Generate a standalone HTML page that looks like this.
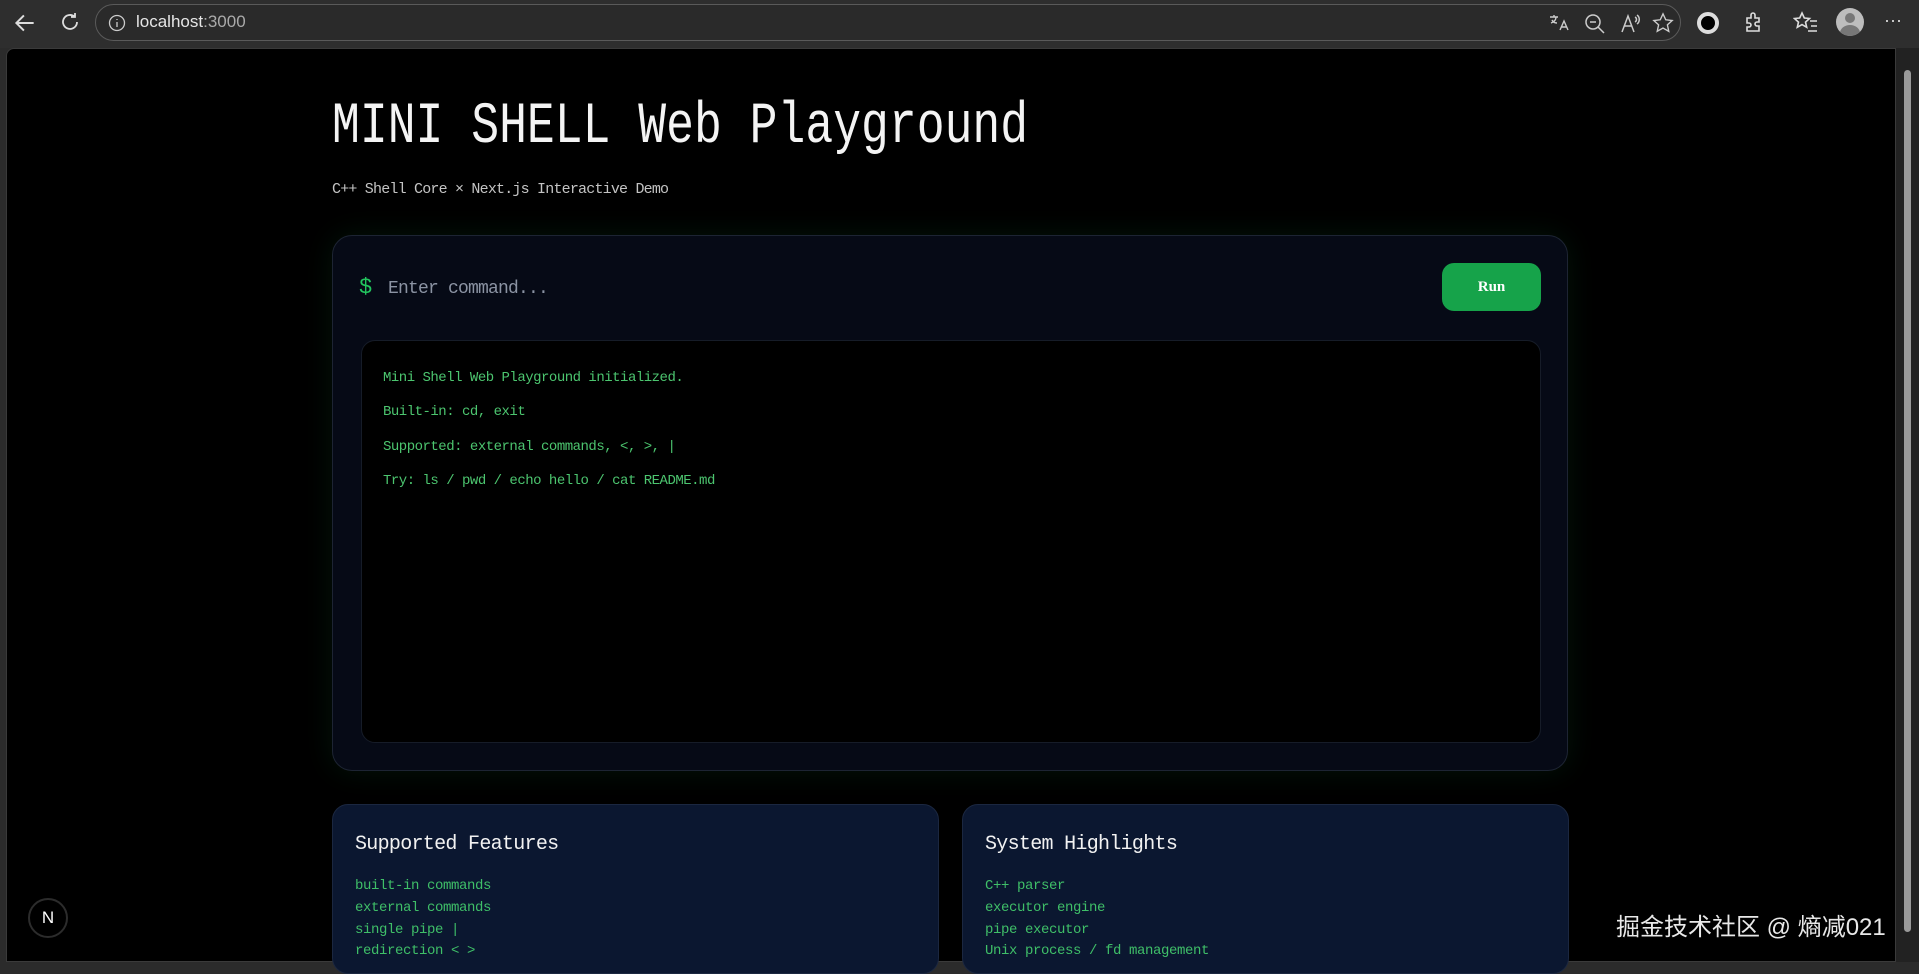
<!DOCTYPE html>
<html><head><meta charset="utf-8"><style>
*{margin:0;padding:0;box-sizing:border-box}
body{width:1919px;height:962px;overflow:hidden;background:#2b2b2b;font-family:"Liberation Mono","Noto Sans CJK SC",monospace;position:relative}
.tb{position:absolute;left:0;top:0;width:1919px;height:48px;background:#2e2e2e}
.url{position:absolute;left:95px;top:4px;width:1586px;height:37px;border:1px solid #5a5a5a;border-radius:19px;background:#2a2a2a}
.url span{position:absolute;left:40px;top:7px;color:#e6e6e6;font-family:"Liberation Sans",sans-serif;font-size:17px}
.frame{position:absolute;left:6px;top:48px;width:1890px;height:914px;background:#000;border-top-left-radius:8px;border:1px solid #3a3a3a}
.sb{position:absolute;left:1896px;top:48px;width:23px;height:914px;background:#222}
.sb div{position:absolute;left:8px;top:22px;width:7px;height:862px;background:#9a9a9a;border-radius:4px}
.t{position:absolute;white-space:nowrap}
.title{left:332px;top:99px;font-family:"Liberation Mono",monospace;font-size:58px;color:#f4f4f4;transform:scaleX(0.8);transform-origin:left top;line-height:1}
.sub{left:332px;top:181px;font-size:15px;color:#c4c4c4;letter-spacing:-0.8px}
.card{position:absolute;left:332px;top:235px;width:1236px;height:536px;background:#060a16;border:1px solid #1d2433;border-radius:20px;box-shadow:0 0 30px rgba(22,163,74,0.12)}
.out{position:absolute;left:361px;top:340px;width:1180px;height:403px;background:#000;border:1px solid #161c28;border-radius:14px}
.run{position:absolute;left:1442px;top:263px;width:99px;height:48px;background:#16a34a;border-radius:12px;color:#fff;font-family:"Liberation Serif",serif;font-weight:bold;font-size:15px;text-align:center;line-height:48px}
.g{color:#4cc56f;font-size:14px;letter-spacing:-0.5px}
.box{position:absolute;top:804px;width:607px;height:170px;background:#0b1730;border:1px solid #1b2740;border-radius:16px}
.h{font-size:20px;color:#f2f2f2;letter-spacing:-0.7px}
.li{font-size:14px;color:#3fbf68;letter-spacing:-0.4px}
.badge{position:absolute;left:28px;top:898px;width:40px;height:40px;border-radius:50%;background:#000;border:2px solid #2c2c2c;color:#fff;font-family:"Liberation Sans",sans-serif;font-size:17px;text-align:center;line-height:36px}
.wm{position:absolute;left:1616px;top:907px;color:#e8e8e8;font-family:"Liberation Sans","Noto Sans CJK SC",sans-serif;font-size:24px;text-shadow:0 0 3px #000}
.ic{position:absolute;top:10px}
</style></head><body>
<div class="tb">
<svg class="ic" style="left:12px" width="26" height="26" viewBox="0 0 24 24" fill="none" stroke="#ddd" stroke-width="1.8"><path d="M20 12H5M11 5l-7 7 7 7"/></svg>
<svg class="ic" style="left:58px" width="24" height="24" viewBox="0 0 24 24" fill="none" stroke="#ddd" stroke-width="1.8"><path d="M19 12a7 7 0 1 1-2.5-5.4M17 3v4h-4"/></svg>
<div class="url"><svg style="position:absolute;left:12px;top:9px" width="18" height="18" viewBox="0 0 18 18" fill="none" stroke="#ccc" stroke-width="1.3"><circle cx="9" cy="9" r="7.5"/><path d="M9 8v5M9 5v1"/></svg><span>localhost<span style="position:static;color:#aaa">:3000</span></span>
<svg style="position:absolute;left:1452px;top:8px" width="22" height="20" viewBox="0 0 22 20" fill="none" stroke="#ccc" stroke-width="1.4"><path d="M2 4h8M6 2v2M3 10c3-1 5-3 5-6M4 7c1 2 3 3 5 3M12 17l4-9 4 9M13.5 14h5"/></svg>
<svg style="position:absolute;left:1488px;top:8px" width="22" height="22" viewBox="0 0 22 22" fill="none" stroke="#ccc" stroke-width="1.5"><circle cx="9" cy="9" r="7"/><path d="M14 14l6 6M6 9h6"/></svg>
<svg style="position:absolute;left:1524px;top:8px" width="22" height="22" viewBox="0 0 22 22" fill="none" stroke="#ccc" stroke-width="1.5"><path d="M2 19L8 3l6 16M4.5 13h7M15 4c2 1 2 4 0 5M17 2c3 2 3 7 0 9"/></svg>
<svg style="position:absolute;left:1556px;top:7px" width="22" height="22" viewBox="0 0 24 24" fill="none" stroke="#ccc" stroke-width="1.5"><path d="M12 2l3 6.5 7 .8-5.2 4.8 1.5 7L12 17.5 5.7 21l1.5-7L2 9.3l7-.8z"/></svg>
</div>
<div style="position:absolute;left:1697px;top:12px;width:22px;height:22px;border-radius:50%;background:#000;border:4px solid #ddd"></div>
<svg class="ic" style="left:1742px;top:11px" width="24" height="24" viewBox="0 0 24 24" fill="none" stroke="#ddd" stroke-width="1.6"><path d="M5 7h4V4a2 2 0 0 1 4 0v3h4v4h-2a2 2 0 0 0 0 4h2v5H5v-4h2a2 2 0 0 0 0-4H5z"/></svg>
<svg class="ic" style="left:1793px;top:11px" width="26" height="24" viewBox="0 0 26 24" fill="none" stroke="#ddd" stroke-width="1.6"><path d="M9 2l2.3 5 5.2.5-4 3.6 1.2 5.2L9 13.6 4.3 16.3l1.2-5.2-4-3.6L6.7 7zM17 10h7M18 15h6M15 20h9"/></svg>
<div style="position:absolute;left:1836px;top:8px;width:28px;height:28px;border-radius:50%;background:#bdbdbd;overflow:hidden"><div style="position:absolute;left:9px;top:5px;width:10px;height:10px;border-radius:50%;background:#777"></div><div style="position:absolute;left:4px;top:17px;width:20px;height:16px;border-radius:50%;background:#777"></div></div>
<div style="position:absolute;left:1884px;top:10px;color:#ddd;font-family:'Liberation Sans';font-size:18px">···</div>
</div>
<div class="frame"></div>
<div class="sb"><div></div></div>
<div class="t title">MINI SHELL Web Playground</div>
<div class="t sub">C++ Shell Core × Next.js Interactive Demo</div>
<div class="card"></div>
<div class="t" style="left:359px;top:275px;color:#22c55e;font-size:22px">$</div>
<div class="t" style="left:388px;top:279px;color:#8b93a3;font-size:18px;letter-spacing:-0.8px">Enter command...</div>
<div class="run">Run</div>
<div class="out"></div>
<div class="t g" style="left:383px;top:370px">Mini Shell Web Playground initialized.</div>
<div class="t g" style="left:383px;top:404px">Built-in: cd, exit</div>
<div class="t g" style="left:383px;top:439px">Supported: external commands, &lt;, &gt;, |</div>
<div class="t g" style="left:383px;top:473px">Try: ls / pwd / echo hello / cat README.md</div>
<div class="box" style="left:332px"></div>
<div class="box" style="left:962px"></div>
<div class="t h" style="left:355px;top:833px">Supported Features</div>
<div class="t li" style="left:355px;top:878px">built-in commands</div>
<div class="t li" style="left:355px;top:900px">external commands</div>
<div class="t li" style="left:355px;top:922px">single pipe |</div>
<div class="t li" style="left:355px;top:943px">redirection &lt; &gt;</div>
<div class="t h" style="left:985px;top:833px">System Highlights</div>
<div class="t li" style="left:985px;top:878px">C++ parser</div>
<div class="t li" style="left:985px;top:900px">executor engine</div>
<div class="t li" style="left:985px;top:922px">pipe executor</div>
<div class="t li" style="left:985px;top:943px">Unix process / fd management</div>
<div class="badge">N</div>
<div class="wm">掘金技术社区 @ 熵减021</div>
</body></html>
